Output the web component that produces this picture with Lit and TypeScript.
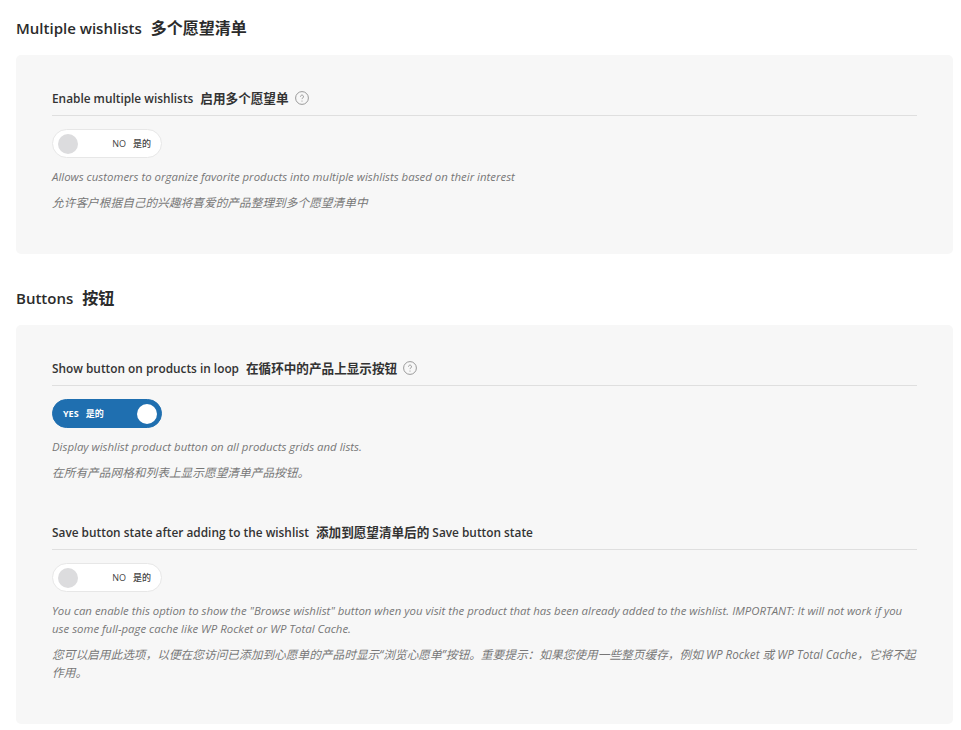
import { LitElement, html, css, nothing } from "lit";
import { customElement } from "lit/decorators.js";

const help = html`<svg class="help" width="14" height="14" viewBox="0 0 14 14" aria-hidden="true">
  <circle cx="7" cy="7" r="6.4" fill="none" stroke="#8f8f8f" stroke-width="0.9"></circle>
  <path d="M5.5 5.6a1.5 1.5 0 1 1 2.3 1.3c-.55.35-.8.6-.8 1.2" fill="none" stroke="#8f8f8f" stroke-width="0.9"></path>
  <circle cx="7" cy="10" r="0.55" fill="#8f8f8f"></circle>
</svg>`;

interface Field {
  en: string;
  zh: string;
  suffix?: string;
  help: boolean;
  on: boolean;
  desc: string;
  descZh: string;
}

const FIRST: Field[] = [
  {
    en: "Enable multiple wishlists",
    zh: "启用多个愿望单",
    help: true,
    on: false,
    desc: "Allows customers to organize favorite products into multiple wishlists based on their interest",
    descZh: "允许客户根据自己的兴趣将喜爱的产品整理到多个愿望清单中",
  },
];

const SECOND: Field[] = [
  {
    en: "Show button on products in loop",
    zh: "在循环中的产品上显示按钮",
    help: true,
    on: true,
    desc: "Display wishlist product button on all products grids and lists.",
    descZh: "在所有产品网格和列表上显示愿望清单产品按钮。",
  },
  {
    en: "Save button state after adding to the wishlist",
    zh: "添加到愿望清单后的",
    suffix: " Save button state",
    help: false,
    on: false,
    desc: 'You can enable this option to show the "Browse wishlist" button when you visit the product that has been already added to the wishlist. IMPORTANT: It will not work if you use some full-page cache like WP Rocket or WP Total Cache.',
    descZh: "您可以启用此选项，以便在您访问已添加到心愿单的产品时显示“浏览心愿单”按钮。重要提示：如果您使用一些整页缓存，例如 WP Rocket 或 WP Total Cache，它将不起作用。",
  },
];

@customElement("app-root")
export class AppRoot extends LitElement {
  static styles = css`
    :host {
      display: block;
      width: 961px;
      height: 730px;
      overflow: hidden;
      background: #fff;
      font-family: "Open Sans", "Noto Sans CJK SC", sans-serif;
      color: #333;
    }
    .page { display: flex; flex-direction: column; padding: 18px 8px 0 16px; }
    h2 {
      margin: 0 0 16px;
      font-size: 15px;
      line-height: 21px;
      font-weight: 600;
      color: #2b2b2b;
    }
    h2 .zh { margin-left: 9px; font-size: 16px; font-weight: 700; }
    .panel {
      background: #f7f7f7;
      border-radius: 5px;
      padding: 33px 36px 43.5px;
      margin-bottom: 34px;
      display: flex;
      flex-direction: column;
      gap: 41.5px;
    }
    .field-head {
      display: flex;
      align-items: center;
      height: 20px;
      padding-bottom: 7px;
      border-bottom: 1px solid #dfdfdf;
      margin-bottom: 13px;
    }
    h3 {
      margin: 0;
      font-size: 11.85px;
      line-height: 20px;
      font-weight: 600;
      color: #333;
    }
    h3 .zh { margin-left: 7px; font-size: 12.6px; font-weight: 600; }
    .help { margin-left: 6px; }
    .toggle {
      box-sizing: border-box;
      width: 110px;
      height: 29px;
      border-radius: 15px;
      border: 1px solid #e7e7e7;
      background: #fff;
      display: flex;
      align-items: center;
      padding: 0 5px;
      font-size: 9px;
      color: #444;
      margin-bottom: 10px;
    }
    .toggle .knob { width: 20px; height: 20px; border-radius: 50%; background: #dcdcde; flex: none; }
    .toggle .label { margin-left: auto; margin-right: 5px; white-space: nowrap; }
    .toggle .label .zh { margin-left: 7px; font-size: 9px; font-weight: 500; }
    .toggle.on { background: #1f6fb0; border-color: #1f6fb0; color: #fff; font-weight: 700; padding: 0 4px 0 10px; }
    .toggle.on .label { margin: 0 auto 0 0; }
    .toggle.on .label .zh { font-weight: 700; }
    .toggle.on .knob { background: #fff; }
    p {
      margin: 0 0 6.5px;
      font-size: 11.42px;
      line-height: 18px;
      font-style: italic;
      color: #777;
    }
    p:last-child { margin-bottom: 0; }
    p.zh { font-size: 11.7px; }
  `;

  private field(f: Field) {
    return html`<div class="field">
      <div class="field-head">
        <h3>${f.en}<span class="zh">${f.zh}</span>${f.suffix ?? nothing}</h3>
        ${f.help ? help : nothing}
      </div>
      <div class="toggle ${f.on ? "on" : ""}">
        ${f.on
          ? html`<span class="label">YES<span class="zh">是的</span></span><span class="knob"></span>`
          : html`<span class="knob"></span><span class="label">NO<span class="zh">是的</span></span>`}
      </div>
      <p>${f.desc}</p>
      <p class="zh">${f.descZh}</p>
    </div>`;
  }

  render() {
    return html`<div class="page">
      <h2>Multiple wishlists<span class="zh">多个愿望清单</span></h2>
      <section class="panel">${FIRST.map((f) => this.field(f))}</section>
      <h2>Buttons<span class="zh">按钮</span></h2>
      <section class="panel">${SECOND.map((f) => this.field(f))}</section>
    </div>`;
  }
}
